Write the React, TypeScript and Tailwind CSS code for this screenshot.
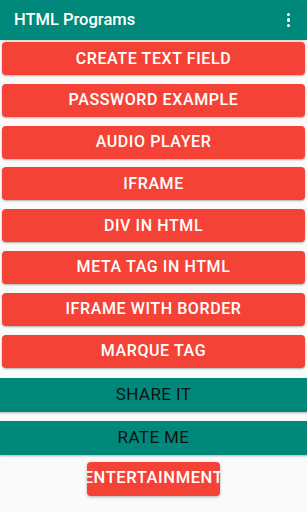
import React from "react";

const items = [
  "CREATE TEXT FIELD",
  "PASSWORD EXAMPLE",
  "AUDIO PLAYER",
  "IFRAME",
  "DIV IN HTML",
  "META TAG IN HTML",
  "IFRAME WITH BORDER",
  "MARQUE TAG",
];

export default function App() {
  return (
    <div
      className="w-[307px] h-[512px] bg-[#fafafa] overflow-hidden"
      style={{ fontFamily: "Roboto, 'Liberation Sans', sans-serif" }}
    >
      <div className="h-[40px] bg-[#00897b] flex items-center justify-between pl-[14px] pr-[17px] shadow-md">
        <span className="text-white text-[16.5px] font-medium">HTML Programs</span>
        <div className="flex flex-col gap-[2px] items-center">
          <span className="w-[3.5px] h-[3.5px] rounded-full bg-white" />
          <span className="w-[3.5px] h-[3.5px] rounded-full bg-white" />
          <span className="w-[3.5px] h-[3.5px] rounded-full bg-white" />
        </div>
      </div>
      <div className="flex flex-col gap-[8.8px] px-[2px] pt-[2px]">
        {items.map((t) => (
          <div
            key={t}
            className="h-[33px] rounded-[4px] bg-[#f44336] flex items-center justify-center text-white text-[16px] tracking-[0.6px] font-medium shadow-[0_1px_2px_rgba(0,0,0,0.3)]"
          >
            {t}
          </div>
        ))}
      </div>
      <div className="mt-[10px] h-[34px] bg-[#00897b] flex items-center justify-center text-[#111] text-[17px] tracking-[0.4px] shadow-[0_1px_2px_rgba(0,0,0,0.3)]">
        SHARE IT
      </div>
      <div className="mt-[9px] h-[34px] bg-[#00897b] flex items-center justify-center text-[#111] text-[17px] tracking-[0.4px] shadow-[0_1px_2px_rgba(0,0,0,0.3)]">
        RATE ME
      </div>
      <div className="flex justify-center mt-[7px]">
        <div className="w-[133px] h-[34px] rounded-[4px] bg-[#f44336] flex items-center justify-center text-white text-[16.5px] tracking-[0.6px] font-medium shadow-[0_1px_3px_rgba(0,0,0,0.3)] whitespace-nowrap overflow-hidden">
          ENTERTAINMENT
        </div>
      </div>
    </div>
  );
}
